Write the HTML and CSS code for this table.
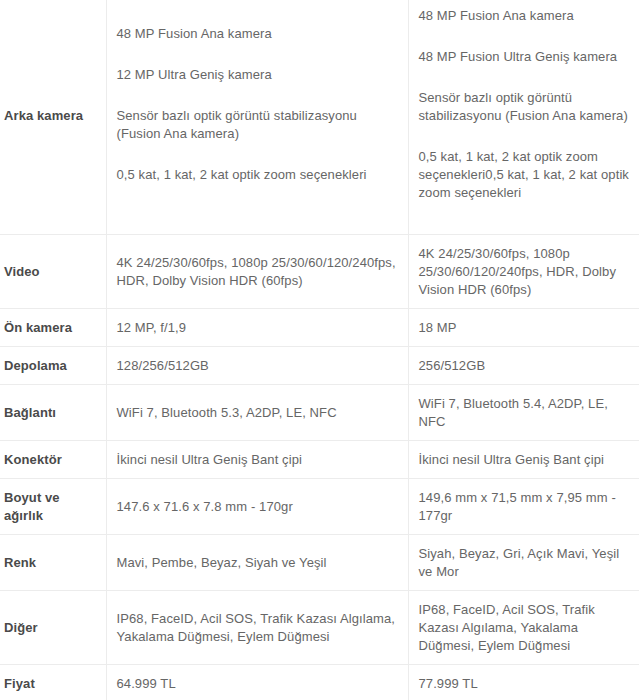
FILE: index.html
```html
<!DOCTYPE html>
<html lang="tr">
<head>
<meta charset="utf-8">
<title>Karşılaştırma</title>
<link rel="stylesheet" href="styles.css">
</head>
<body>
<div class="wrap">
<table class="specs">
  <colgroup>
    <col class="c-label">
    <col class="c-a">
    <col class="c-b">
  </colgroup>
  <tbody>
    <tr>
      <th>Arka kamera</th>
      <td>
        <p>48 MP Fusion Ana kamera</p>
        <p>12 MP Ultra Geniş kamera</p>
        <p>Sensör bazlı optik görüntü stabilizasyonu (Fusion Ana kamera)</p>
        <p>0,5 kat, 1 kat, 2 kat optik zoom seçenekleri</p>
      </td>
      <td>
        <p>48 MP Fusion Ana kamera</p>
        <p>48 MP Fusion Ultra Geniş kamera</p>
        <p>Sensör bazlı optik görüntü stabilizasyonu (Fusion Ana kamera)</p>
        <p>0,5 kat, 1 kat, 2 kat optik zoom seçenekleri0,5 kat, 1 kat, 2 kat optik zoom seçenekleri</p>
      </td>
    </tr>
    <tr>
      <th>Video</th>
      <td>4K 24/25/30/60fps, 1080p 25/30/60/120/240fps, HDR, Dolby Vision HDR (60fps)</td>
      <td>4K 24/25/30/60fps, 1080p 25/30/60/120/240fps, HDR, Dolby Vision HDR (60fps)</td>
    </tr>
    <tr>
      <th>Ön kamera</th>
      <td>12 MP, f/1,9</td>
      <td>18 MP</td>
    </tr>
    <tr>
      <th>Depolama</th>
      <td>128/256/512GB</td>
      <td>256/512GB</td>
    </tr>
    <tr>
      <th>Bağlantı</th>
      <td>WiFi 7, Bluetooth 5.3, A2DP, LE, NFC</td>
      <td>WiFi 7, Bluetooth 5.4, A2DP, LE, NFC</td>
    </tr>
    <tr>
      <th>Konektör</th>
      <td>İkinci nesil Ultra Geniş Bant çipi</td>
      <td>İkinci nesil Ultra Geniş Bant çipi</td>
    </tr>
    <tr>
      <th>Boyut ve ağırlık</th>
      <td>147.6 x 71.6 x 7.8 mm - 170gr</td>
      <td>149,6 mm x 71,5 mm x 7,95 mm - 177gr</td>
    </tr>
    <tr>
      <th>Renk</th>
      <td>Mavi, Pembe, Beyaz, Siyah ve Yeşil</td>
      <td>Siyah, Beyaz, Gri, Açık Mavi, Yeşil ve Mor</td>
    </tr>
    <tr>
      <th>Diğer</th>
      <td>IP68, FaceID, Acil SOS, Trafik Kazası Algılama, Yakalama Düğmesi, Eylem Düğmesi</td>
      <td>IP68, FaceID, Acil SOS, Trafik Kazası Algılama, Yakalama Düğmesi, Eylem Düğmesi</td>
    </tr>
    <tr>
      <th>Fiyat</th>
      <td>64.999 TL</td>
      <td>77.999 TL</td>
    </tr>
  </tbody>
</table>
</div>
</body>
</html>
```
FILE: styles.css
```css
html, body {
  margin: 0;
  padding: 0;
  background: #ffffff;
}
body {
  overflow: hidden;
  font-family: "Liberation Sans", Arial, sans-serif;
  font-size: 13px;
  letter-spacing: 0.1px;
  line-height: 18px;
  color: #666666;
}
.wrap {
  margin-top: -4px;
  width: 644px;
}
.specs {
  width: 644px;
  table-layout: fixed;
  border-collapse: collapse;
}
.c-label { width: 106px; }
.c-a { width: 302px; }
.c-b { width: 236px; }
.specs th,
.specs td {
  border-top: 1px solid #ececec;
  border-bottom: 1px solid #ececec;
  padding: 10px 10px 9px;
  vertical-align: middle;
  text-align: left;
}
.specs th {
  padding-left: 4px;
  font-weight: bold;
  color: #4a4a4a;
}
.specs td {
  border-left: 1px solid #ececec;
}
.specs p {
  margin: 0 0 23px;
}
```
